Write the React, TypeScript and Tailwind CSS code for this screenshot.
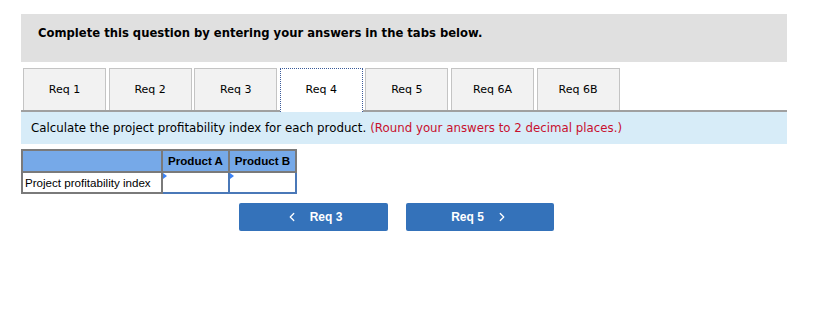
import { ChevronLeft, ChevronRight } from "lucide-react";

const tabs = ["Req 1", "Req 2", "Req 3", "Req 4", "Req 5", "Req 6A", "Req 6B"];
const active = "Req 4";

function InputCell() {
  return (
    <td className="relative h-[21px] w-[67px] border-2 border-[#4a78b8] bg-white p-0">
      <span className="absolute left-0 top-0 h-0 w-0 border-y-[3px] border-l-[4px] border-y-transparent border-l-[#3b82f6]" />
    </td>
  );
}

export default function App() {
  return (
    <div className="h-[333px] w-[840px] bg-white pt-[14px] pl-[21px] font-['DejaVu_Sans',sans-serif] text-black">
      <div className="w-[766px]">
        {/* Instruction header */}
        <div className="flex h-[48px] items-center bg-[#e0e0e0] pl-[17px] pb-[8px]">
          <p className="text-[11.6px] font-bold">Complete this question by entering your answers in the tabs below.</p>
        </div>

        {/* Tabs */}
        <div className="mt-[6px] flex gap-[2.6px] border-b-2 border-[#a0a0a0] pl-[2px]">
          {tabs.map((t) => (
            <div
              key={t}
              className={
                t === active
                  ? "-mb-[2px] flex h-[44px] w-[83px] items-center justify-center border border-b-0 border-dotted border-[#3b5b9a] bg-white pb-[1px] text-[11px]"
                  : "flex h-[42px] w-[83px] items-center justify-center border border-b-0 border-[#c4c4c4] bg-[#f2f2f2] pt-[1px] text-[11px]"
              }
            >
              {t}
            </div>
          ))}
        </div>

        {/* Prompt */}
        <div className="flex h-[32px] items-center bg-[#d7ecf8] pl-[10px] pt-[1px] text-[11.8px]">
          <span>Calculate the project profitability index for each product.</span>
          <span className="ml-[4px] text-[#c8102e]">(Round your answers to 2 decimal places.)</span>
        </div>

        {/* Table */}
        <table className="mt-[5px] border-collapse font-['Liberation_Sans',Arial,sans-serif] text-[11.6px]">
          <tbody>
            <tr className="bg-[#76a9e8]">
              <th className="h-[22px] w-[140px] border-2 border-[#7a7a7a] p-0" />
              <th className="w-[67px] border-2 border-[#7a7a7a] px-[3px] font-bold">Product A</th>
              <th className="w-[67px] border-2 border-[#7a7a7a] px-[3px] font-bold">Product B</th>
            </tr>
            <tr>
              <td className="h-[21px] border-2 border-[#7a7a7a] pl-[2px] text-left">Project profitability index</td>
              <InputCell />
              <InputCell />
            </tr>
          </tbody>
        </table>

        {/* Navigation */}
        <div className="mt-[9px] flex gap-[18px] pl-[218px] font-['Liberation_Sans',Arial,sans-serif]">
          <button className="flex h-[28px] w-[149px] items-center justify-center gap-[11px] rounded-[2px] bg-[#3472ba] text-[12px] font-bold text-white">
            <ChevronLeft size={14} strokeWidth={2.2} />
            <span>Req 3</span>
          </button>
          <button className="flex h-[28px] w-[148px] items-center justify-center gap-[11px] rounded-[2px] bg-[#3472ba] text-[12px] font-bold text-white">
            <span>Req 5</span>
            <ChevronRight size={14} strokeWidth={2.2} />
          </button>
        </div>
      </div>
    </div>
  );
}
